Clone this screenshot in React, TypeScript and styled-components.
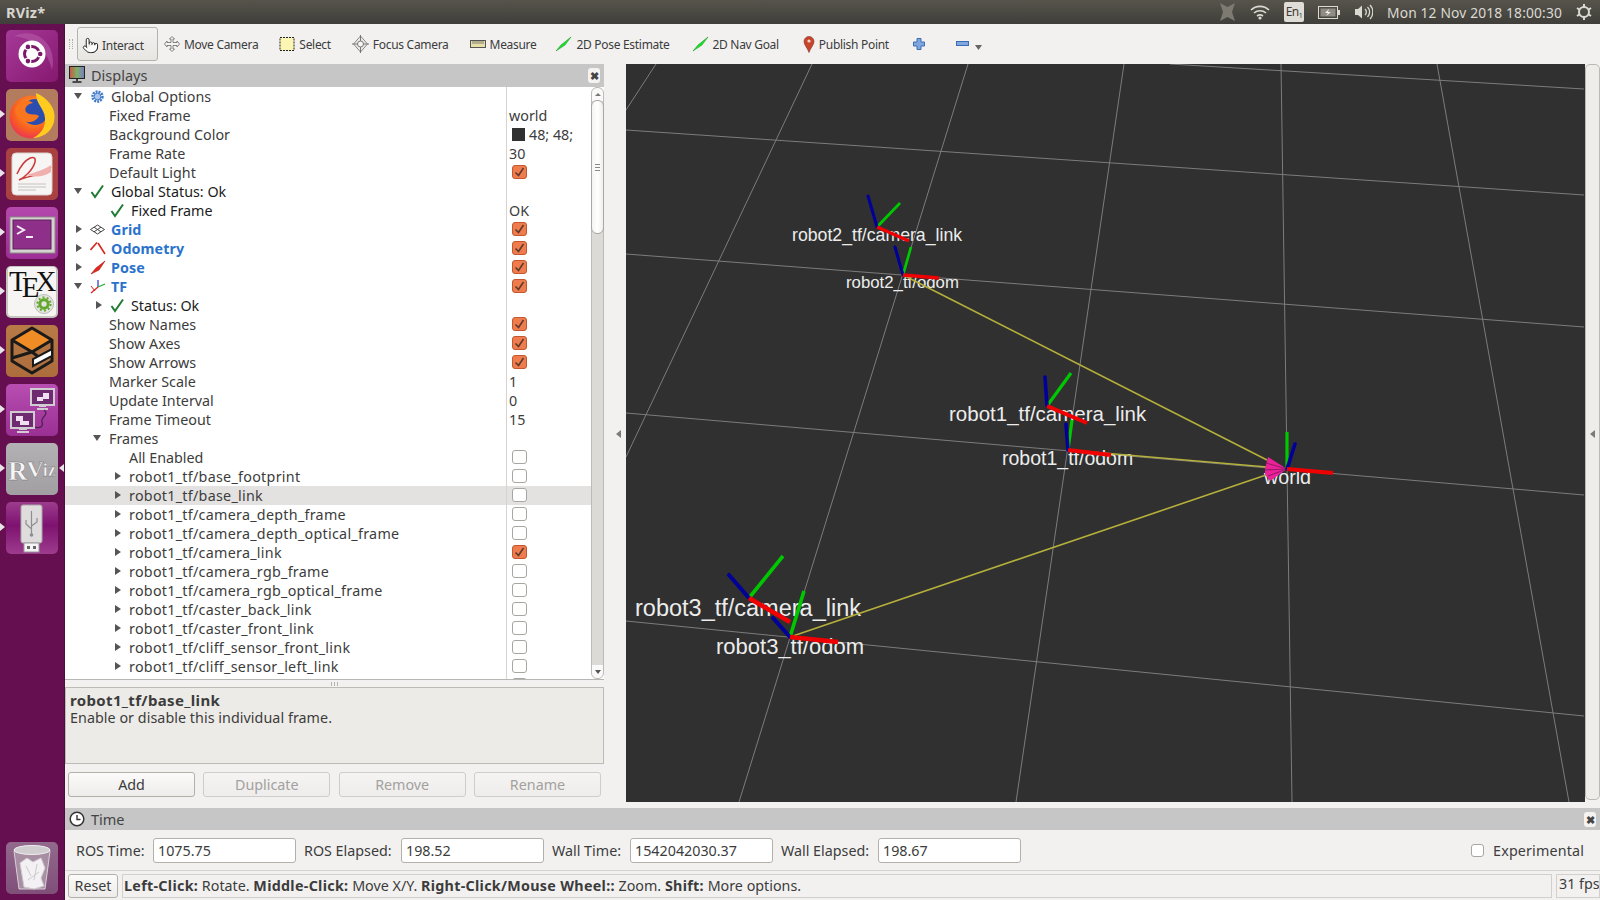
import React from "react";
import styled, { createGlobalStyle } from "styled-components";
import { Pointer } from "lucide-react";

const GlobalStyle = createGlobalStyle`
  html, body {
    margin: 0;
    padding: 0;
    background: #f2f1f0;
    overflow: hidden;
  }
  * {
    box-sizing: border-box;
  }
`;

const UI_FONT = `"Noto Sans", "Open Sans", sans-serif`;

const Page = styled.div`
  width: 1600px;
  height: 900px;
  display: flex;
  flex-direction: column;
  font-family: ${UI_FONT};
  font-size: 14.3px;
  color: #3c3c3c;
  overflow: hidden;
`;

/* ---------- ubuntu top bar ---------- */

const TopBar = styled.div`
  height: 24px;
  flex: none;
  display: flex;
  align-items: center;
  padding: 0 8px 0 6px;
  background: linear-gradient(#56544b, #3f3e3a);
`;

const WindowTitle = styled.div`
  font-weight: 700;
  font-size: 14.5px;
  letter-spacing: 0.2px;
  color: #d9d6cf;
  flex: 1;
`;

const Tray = styled.div`
  display: flex;
  align-items: center;
  height: 24px;
  gap: 14px;
`;

const LangBox = styled.div`
  width: 20px;
  height: 20px;
  background: #e0ddd6;
  border-radius: 2px;
  color: #3c3b37;
  font-size: 12px;
  line-height: 20px;
  text-align: center;
  letter-spacing: -0.5px;
`;

const LangIndex = styled.span`
  font-size: 7px;
  vertical-align: -2px;
`;

const Clock = styled.div`
  color: #dcd9d2;
  font-size: 13.8px;
  letter-spacing: 0.15px;
  width: 175px;
  white-space: nowrap;
`;

/* ---------- launcher ---------- */

const Body = styled.div`
  flex: 1;
  display: flex;
  min-height: 0;
`;

const Launcher = styled.div`
  width: 65px;
  flex: none;
  display: flex;
  flex-direction: column;
  align-items: center;
  gap: 7px;
  padding: 6px 1px 6px 0;
  background: #650f50;
  border-right: 1px solid #4d0c3e;
`;

const Tile = styled.div<{ $bg: string; $last?: boolean }>`
  position: relative;
  width: 52px;
  height: 52px;
  flex: none;
  border-radius: 5px;
  background: ${(p) => p.$bg};
  margin-top: ${(p) => (p.$last ? "auto" : "0")};
  svg {
    display: block;
  }
`;

const Pip = styled.span<{ $side: "left" | "right" }>`
  position: absolute;
  top: 21px;
  ${(p) => (p.$side === "left" ? "left: -6px;" : "right: -6px;")}
  width: 0;
  height: 0;
  border-top: 4px solid transparent;
  border-bottom: 4px solid transparent;
  ${(p) =>
    p.$side === "left"
      ? "border-left: 5px solid #e8e4e8;"
      : "border-right: 5px solid #e8e4e8;"}
`;

/* ---------- toolbar ---------- */

const Main = styled.div`
  flex: 1;
  min-width: 0;
  display: flex;
  flex-direction: column;
`;

const Toolbar = styled.div`
  height: 40px;
  flex: none;
  display: flex;
  align-items: center;
  padding-left: 4px;
  background: #f2f1f0;
  font-size: 12px;
  letter-spacing: -0.3px;
  color: #3c3c3c;
`;

const Grip = styled.div`
  width: 4px;
  height: 10px;
  margin-right: 4px;
  border-left: 1px dotted #aaa;
  border-right: 1px dotted #aaa;
`;

const ToolGroup = styled.div`
  display: flex;
  align-items: center;
  gap: 21px;
`;

const ActiveTool = styled.div`
  width: 81px;
  height: 34px;
  display: flex;
  align-items: center;
  gap: 3px;
  padding-left: 4px;
  padding-top: 2px;
  border: 1px solid #b5b2ac;
  border-radius: 3px;
  background: linear-gradient(#f3f2f0, #e8e6e3);
  margin-right: 6px;
`;

const Tool = styled.div<{ $nudge?: number }>`
  display: flex;
  align-items: center;
  gap: 4px;
  white-space: nowrap;
  margin-left: ${(p) => p.$nudge ?? 0}px;
`;

/* ---------- workspace ---------- */

const Workspace = styled.div`
  height: 744px;
  flex: none;
  display: flex;
  background: #f2f1f0;
`;

const Dock = styled.div`
  width: 539px;
  flex: none;
  display: flex;
  flex-direction: column;
`;

const DockTitle = styled.div`
  position: relative;
  height: 23px;
  flex: none;
  display: flex;
  align-items: center;
  gap: 6px;
  padding: 0 0 2px 4px;
  background: #c6c6c6;
  font-size: 14.5px;
  color: #444;
`;

const CloseBox = styled.div`
  position: absolute;
  right: 4px;
  top: 4px;
  width: 12px;
  height: 15px;
  border-radius: 3px;
  background: #f4f3f2;
  color: #444;
  font-size: 11px;
  font-weight: 700;
  line-height: 15px;
  text-align: center;
`;

const TreeArea = styled.div`
  height: 593px;
  flex: none;
  display: flex;
  background: #fff;
  border-bottom: 1px solid #b8b6b2;
`;

const TreeRows = styled.div`
  width: 526px;
  flex: none;
  overflow: hidden;
`;

const Row = styled.div<{ $selected?: boolean }>`
  height: 19px;
  display: flex;
  background: ${(p) => (p.$selected ? "#e3e2e0" : "#fff")};
`;

const NameCell = styled.div<{ $indent: number }>`
  width: 441px;
  flex: none;
  display: flex;
  align-items: center;
  padding-left: ${(p) => p.$indent}px;
  padding-bottom: 1px;
  white-space: nowrap;
`;

const ValueCell = styled.div`
  width: 85px;
  flex: none;
  display: flex;
  align-items: center;
  padding-left: 2px;
  padding-bottom: 1px;
  border-left: 1px solid #d6d4d1;
  white-space: nowrap;
  overflow: hidden;
`;

const ArrowSlot = styled.span`
  width: 17px;
  flex: none;
  display: block;
  padding-left: 1px;
`;

const Arrow = styled.span<{ $open: boolean }>`
  display: block;
  width: 0;
  height: 0;
  ${(p) =>
    p.$open
      ? `border-left: 4.5px solid transparent;
         border-right: 4.5px solid transparent;
         border-top: 6px solid #555;`
      : `margin-left: 2px;
         border-top: 4.5px solid transparent;
         border-bottom: 4.5px solid transparent;
         border-left: 6px solid #555;`}
`;

const IconSlot = styled.span`
  width: 21px;
  flex: none;
  display: flex;
  align-items: center;
  svg {
    display: block;
  }
`;

const Label = styled.span<{ $tone?: "link" | "dark"; $frame?: boolean }>`
  font-weight: ${(p) => (p.$tone === "link" ? 700 : 400)};
  letter-spacing: ${(p) => (p.$frame ? "0.28px" : p.$tone === "link" ? "0.1px" : "0")};
  color: ${(p) =>
    p.$tone === "link" ? "#2a73cc" : p.$tone === "dark" ? "#1c1c1c" : "#3c3c3c"};
`;

const CheckBox = styled.span<{ $on?: boolean }>`
  width: 15px;
  height: 14px;
  margin-left: 3px;
  flex: none;
  display: flex;
  align-items: center;
  justify-content: center;
  border-radius: 3px;
  border: 1px solid ${(p) => (p.$on ? "#c2592e" : "#a8a6a2")};
  background: ${(p) => (p.$on ? "#ee7c4e" : "#fff")};
`;

const Swatch = styled.span`
  width: 13px;
  height: 13px;
  margin: 0 4px 0 3px;
  flex: none;
  background: #303030;
`;

const ScrollBar = styled.div`
  width: 13px;
  flex: none;
  position: relative;
  background: #dcdad7;
  border: 1px solid #bdbbb7;
  border-radius: 6px;
`;

const ScrollThumb = styled.div`
  position: absolute;
  left: -1px;
  right: -1px;
  top: 12px;
  height: 134px;
  border: 1px solid #a9a7a3;
  border-radius: 6px;
  background: linear-gradient(90deg, #f5f4f3, #fff 50%, #efeeec);
  display: flex;
  align-items: center;
  justify-content: center;
`;

const ThumbGrip = styled.div`
  width: 5px;
  height: 7px;
  border-top: 1px solid #888;
  border-bottom: 1px solid #888;
  position: relative;
  &::after {
    content: "";
    position: absolute;
    left: 0;
    right: 0;
    top: 2px;
    height: 1px;
    background: #888;
  }
`;

const ScrollCap = styled.div<{ $at: "top" | "bottom" }>`
  position: absolute;
  left: 0;
  right: 0;
  ${(p) => (p.$at === "top" ? "top: 0; border-radius: 6px 6px 0 0;" : "bottom: 0; border-radius: 0 0 6px 6px;")}
  height: 13px;
  background: #fafafa;
  display: flex;
  align-items: center;
  justify-content: center;
`;

const CapArrow = styled.span<{ $up?: boolean }>`
  width: 0;
  height: 0;
  border-left: 3px solid transparent;
  border-right: 3px solid transparent;
  ${(p) => (p.$up ? "border-bottom: 3px solid #777;" : "border-top: 4px solid #555;")}
`;

const SplitHandle = styled.div`
  height: 7px;
  flex: none;
  display: flex;
  align-items: center;
  justify-content: center;
`;

const SplitMarks = styled.span`
  width: 7px;
  height: 4px;
  background: repeating-linear-gradient(90deg, #b5b3af 0 1px, transparent 1px 3px);
`;

const Description = styled.div`
  height: 77px;
  flex: none;
  padding: 4px 4px;
  background: #edebe7;
  border: 1px solid #bdbbb6;
  font-size: 14.3px;
  line-height: 17px;
  color: #3c3c3c;
  letter-spacing: 0.05px;
`;

const DescTitle = styled.div`
  font-weight: 700;
  font-size: 15px;
  letter-spacing: 0.35px;
`;

const DockButtons = styled.div`
  display: flex;
  justify-content: space-between;
  padding: 8px 3px 0 3px;
`;

const PushButton = styled.button<{ $w?: number; $h?: number }>`
  width: ${(p) => p.$w ?? 127}px;
  height: ${(p) => p.$h ?? 25}px;
  padding: 0;
  font-family: ${UI_FONT};
  font-size: 14.3px;
  color: #3c3c3c;
  border: 1px solid #b3b0aa;
  border-radius: 3px;
  background: linear-gradient(#fbfbfa, #eeecea);
  &:disabled {
    color: #a2a19e;
    border-color: #cfcdc9;
    background: linear-gradient(#f5f4f3, #eeedeb);
  }
`;

const Gutter = styled.div`
  width: 22px;
  flex: none;
  display: flex;
  align-items: center;
  padding-left: 12px;
  padding-bottom: 4px;
`;

const GutterArrow = styled.span`
  width: 0;
  height: 0;
  border-top: 4px solid transparent;
  border-bottom: 4px solid transparent;
  border-right: 5px solid #7c7b78;
`;

const RenderPanel = styled.div`
  width: 959px;
  height: 738px;
  flex: none;
  background: #303030;
  svg {
    display: block;
  }
`;

const SideHandle = styled.div`
  width: 15px;
  height: 736px;
  flex: none;
  display: flex;
  align-items: center;
  justify-content: center;
  padding-top: 4px;
  background: #efedea;
  border: 1px solid #bcb9b4;
  border-radius: 5px;
`;

/* ---------- time panel ---------- */

const TimeTitle = styled(DockTitle)`
  height: 22px;
  padding-bottom: 0;
`;

const TimeRow = styled.div`
  height: 40px;
  flex: none;
  display: flex;
  align-items: center;
  padding: 0 16px 0 11px;
  gap: 8px;
  background: #f2f1f0;
`;

const TimeLabel = styled.span<{ $w: number }>`
  width: ${(p) => p.$w}px;
  white-space: nowrap;
`;

const TimeInput = styled.div`
  width: 143px;
  height: 25px;
  padding-left: 4px;
  line-height: 23px;
  background: #fff;
  border: 1px solid #b3b0aa;
  border-radius: 3px;
`;

const Experimental = styled.div`
  margin-left: auto;
  display: flex;
  align-items: center;
  gap: 9px;
  letter-spacing: 0.15px;
`;

const ExperimentalBox = styled.span`
  width: 13px;
  height: 13px;
  border: 1px solid #a8a6a2;
  border-radius: 3px;
  background: #fff;
`;

const StatusBar = styled.div`
  height: 30px;
  flex: none;
  display: flex;
  align-items: center;
  gap: 4px;
  padding: 3px 0 3px 3px;
  background: #f2f1f0;
  border-top: 1px solid #d4d2ce;
`;

const StatusBox = styled.div`
  width: 1430px;
  height: 24px;
  padding-left: 1px;
  line-height: 21px;
  border: 1px solid #d2d0cc;
  white-space: nowrap;
`;

const Strong = styled.b`
  letter-spacing: 0.3px;
`;

const FpsBox = styled.div`
  flex: 1;
  height: 24px;
  padding-left: 2px;
  line-height: 17px;
  border: 1px solid #d2d0cc;
  white-space: nowrap;
  overflow: hidden;
`;

/* ---------- tree data ---------- */

type TreeIcon = "gear" | "ok" | "grid" | "odom" | "pose" | "tf";

type TreeRowData = {
  name: string;
  indent: number;
  arrow?: "open" | "closed";
  icon?: TreeIcon;
  tone?: "link" | "dark";
  value?: string;
  color?: boolean;
  check?: boolean;
  selected?: boolean;
  isFrame?: boolean;
};

const frame = (name: string, extra: Partial<TreeRowData> = {}): TreeRowData => ({
  name: `robot1_tf/${name}`,
  indent: 47,
  arrow: "closed",
  check: false,
  isFrame: true,
  ...extra,
});

const rows: TreeRowData[] = [
  { name: "Global Options", indent: 8, arrow: "open", icon: "gear" },
  { name: "Fixed Frame", indent: 44, value: "world" },
  { name: "Background Color", indent: 44, value: "48; 48;", color: true },
  { name: "Frame Rate", indent: 44, value: "30" },
  { name: "Default Light", indent: 44, check: true },
  { name: "Global Status: Ok", indent: 8, arrow: "open", icon: "ok", tone: "dark" },
  { name: "Fixed Frame", indent: 45, icon: "ok", tone: "dark", value: "OK" },
  { name: "Grid", indent: 8, arrow: "closed", icon: "grid", tone: "link", check: true },
  { name: "Odometry", indent: 8, arrow: "closed", icon: "odom", tone: "link", check: true },
  { name: "Pose", indent: 8, arrow: "closed", icon: "pose", tone: "link", check: true },
  { name: "TF", indent: 8, arrow: "open", icon: "tf", tone: "link", check: true },
  { name: "Status: Ok", indent: 28, arrow: "closed", icon: "ok", tone: "dark" },
  { name: "Show Names", indent: 44, check: true },
  { name: "Show Axes", indent: 44, check: true },
  { name: "Show Arrows", indent: 44, check: true },
  { name: "Marker Scale", indent: 44, value: "1" },
  { name: "Update Interval", indent: 44, value: "0" },
  { name: "Frame Timeout", indent: 44, value: "15" },
  { name: "Frames", indent: 27, arrow: "open" },
  { name: "All Enabled", indent: 64, check: false },
  frame("base_footprint"),
  frame("base_link", { selected: true }),
  frame("camera_depth_frame"),
  frame("camera_depth_optical_frame"),
  frame("camera_link", { check: true }),
  frame("camera_rgb_frame"),
  frame("camera_rgb_optical_frame"),
  frame("caster_back_link"),
  frame("caster_front_link"),
  frame("cliff_sensor_front_link"),
  frame("cliff_sensor_left_link"),
  frame("cliff_sensor_right_link"),
];

/* ---------- small icons ---------- */

const TickMark = () => (
  <svg width="11" height="10" viewBox="0 0 11 10">
    <path d="M1.5 5.5 L4.5 8.5 L9.5 1" fill="none" stroke="#5d3a2a" strokeWidth="1.6" />
  </svg>
);

const TreeIconView = ({ kind }: { kind: TreeIcon }) => {
  if (kind === "gear") {
    return (
      <svg width="15" height="15" viewBox="0 0 15 15">
        <circle cx="7.5" cy="7.5" r="5" fill="none" stroke="#3d78c9" strokeWidth="2.4" strokeDasharray="2 1" />
        <circle cx="7.5" cy="7.5" r="3.4" fill="#a9c6ea" stroke="#3d78c9" />
      </svg>
    );
  }
  if (kind === "ok") {
    return (
      <svg width="15" height="15" viewBox="0 0 15 15">
        <path d="M1.5 8 L5 13 L13 1.5" fill="none" stroke="#1f7a33" strokeWidth="2" />
      </svg>
    );
  }
  if (kind === "grid") {
    return (
      <svg width="15" height="15" viewBox="0 0 15 15">
        <path d="M0.5 7.5 L7.5 3 L14.5 7.5 L7.5 12 Z M4 5.2 L11 9.8 M11 5.2 L4 9.8" fill="none" stroke="#444" strokeWidth="1" />
      </svg>
    );
  }
  if (kind === "odom") {
    return (
      <svg width="16" height="15" viewBox="0 0 16 15">
        <path d="M0.5 9 L7 1.5 M8 2 L15 13" fill="none" stroke="#d8261c" strokeWidth="1.6" />
      </svg>
    );
  }
  if (kind === "pose") {
    return (
      <svg width="16" height="15" viewBox="0 0 16 15">
        <path d="M1 14 L6 8 L15 1 L9 10 Z" fill="#e8251b" stroke="#a31a12" strokeWidth="0.6" />
      </svg>
    );
  }
  return (
    <svg width="16" height="15" viewBox="0 0 16 15">
      <path d="M8 8 L8 1" stroke="#2233cc" strokeWidth="1.2" />
      <path d="M8 8 L15 5" stroke="#22aa33" strokeWidth="1.2" />
      <path d="M8 8 L1 14" stroke="#dd2222" strokeWidth="1.2" />
      <path d="M1 7 L5 12" stroke="#dd2222" strokeWidth="1" />
    </svg>
  );
};

const MonitorIcon = () => (
  <svg width="16" height="17" viewBox="0 0 16 17">
    <defs>
      <linearGradient id="screen" x1="0" x2="1" y1="0" y2="0">
        <stop offset="0" stopColor="#c9553f" />
        <stop offset="0.5" stopColor="#7db06a" />
        <stop offset="1" stopColor="#7a7ac4" />
      </linearGradient>
    </defs>
    <rect x="0.5" y="0.5" width="15" height="12" fill="url(#screen)" stroke="#222" />
    <path d="M8 13 V15 M3.5 16 H12.5" stroke="#222" strokeWidth="1.6" />
  </svg>
);

const ClockIcon = () => (
  <svg width="16" height="16" viewBox="0 0 16 16">
    <circle cx="8" cy="8" r="6.8" fill="#fff" stroke="#333" strokeWidth="1.5" />
    <path d="M8 4 V8.5 H11.5" fill="none" stroke="#333" strokeWidth="1.4" />
  </svg>
);

const MoveIcon = () => (
  <svg width="16" height="16" viewBox="0 0 16 16">
    <path
      d="M8 0.5 L10.5 3 H9 V6.5 H13 V5 L15.5 8 L13 11 V9.5 H9 V13 H10.5 L8 15.5 L5.5 13 H7 V9.5 H3 V11 L0.5 8 L3 5 V6.5 H7 V3 H5.5 Z"
      fill="#f4f4f2"
      stroke="#666"
      strokeWidth="0.8"
    />
  </svg>
);

const SelectIcon = () => (
  <svg width="16" height="16" viewBox="0 0 16 16">
    <rect x="1" y="1.5" width="14" height="13" fill="#fbf6b4" stroke="#222" strokeDasharray="2 1" />
  </svg>
);

const FocusIcon = () => (
  <svg width="17" height="18" viewBox="0 0 17 18">
    <path d="M8.5 1 L15.5 9 L8.5 17 L1.5 9 Z" fill="#ecebe8" stroke="#888" />
    <path d="M8.5 0 V18 M0 9 H17" stroke="#777" strokeWidth="1" />
    <circle cx="8.5" cy="9" r="3" fill="#f5f5f3" stroke="#777" />
  </svg>
);

const MeasureIcon = () => (
  <svg width="16" height="8" viewBox="0 0 16 8">
    <rect x="0.5" y="0.5" width="15" height="7" fill="#e7dfa8" stroke="#555" />
    <path d="M3 1 V4 M5 1 V4 M7 1 V4 M9 1 V4 M11 1 V4 M13 1 V4" stroke="#666" strokeWidth="0.8" />
  </svg>
);

const GreenArrowIcon = () => (
  <svg width="17" height="16" viewBox="0 0 17 16">
    <path d="M1 15 L6 9 L16 1 L10 9 Z" fill="#18e32b" stroke="#0c8c1a" strokeWidth="0.5" />
  </svg>
);

const PinIcon = () => (
  <svg width="12" height="17" viewBox="0 0 12 17">
    <path d="M6 16.5 C4.5 12 1 9 1 5.5 A5 5 0 0 1 11 5.5 C11 9 7.5 12 6 16.5 Z" fill="#c8452c" stroke="#7a3a28" strokeWidth="0.6" />
    <circle cx="6" cy="5" r="1.6" fill="#f0d8c8" />
  </svg>
);

const PlusIcon = () => (
  <svg width="12" height="12" viewBox="0 0 12 12">
    <path d="M4 0.5 H8 V4 H11.5 V8 H8 V11.5 H4 V8 H0.5 V4 H4 Z" fill="#7fa6de" stroke="#3c6cb4" />
  </svg>
);

const MinusIcon = () => (
  <svg width="26" height="12" viewBox="0 0 26 12">
    <rect x="0.5" y="3.5" width="12" height="4" fill="#7fa6de" stroke="#3c6cb4" />
    <path d="M19 7 H26 L22.5 12 Z" fill="#666" />
  </svg>
);

/* ---------- tray ---------- */

const TrayIcons = () => (
  <Tray>
    <svg width="17" height="18" viewBox="0 0 17 18">
      <path d="M1 0 L8.5 4 L16 0 L13 9 L16 18 L8.5 14 L1 18 L4 9 Z" fill="#7d7a72" />
    </svg>
    <svg width="20" height="15" viewBox="0 0 20 15">
      <path d="M1 5 A13 13 0 0 1 19 5 M4 8 A9 9 0 0 1 16 8 M7 11 A5 5 0 0 1 13 11" fill="none" stroke="#dcd9d2" strokeWidth="1.6" />
      <circle cx="10" cy="13" r="1.6" fill="#dcd9d2" />
    </svg>
    <LangBox>
      En<LangIndex>1</LangIndex>
    </LangBox>
    <svg width="22" height="13" viewBox="0 0 22 13">
      <rect x="0.5" y="0.5" width="19" height="12" fill="none" stroke="#dcd9d2" />
      <rect x="2.5" y="2.5" width="15" height="8" fill="#8f8c85" />
      <path d="M20 4 H22 V9 H20 Z" fill="#dcd9d2" />
      <path d="M11 3 L7 7 H10 L8 10 L13 6 H10 Z" fill="#f2f1ee" />
    </svg>
    <svg width="19" height="16" viewBox="0 0 19 16">
      <path d="M1 5 H4 L8 1.5 V14.5 L4 11 H1 Z" fill="#dcd9d2" />
      <path d="M11 5 A4 4 0 0 1 11 11 M13.5 3 A7 7 0 0 1 13.5 13 M16 1 A10 10 0 0 1 16 15" fill="none" stroke="#dcd9d2" strokeWidth="1.3" />
    </svg>
    <Clock>Mon 12 Nov 2018 18:00:30</Clock>
    <svg width="16" height="18" viewBox="0 0 16 18">
      <circle cx="8" cy="9" r="5" fill="none" stroke="#dcd9d2" strokeWidth="2" />
      <path d="M8 1 V5 M8 13 V17 M1 5 L4 7 M15 5 L12 7 M1 13 L4 11 M15 13 L12 11" stroke="#dcd9d2" strokeWidth="2" />
    </svg>
  </Tray>
);

/* ---------- launcher icons ---------- */

const UbuntuTile = () => (
  <svg width="52" height="52" viewBox="0 0 52 52">
    <path d="M8 6 C30 -4 52 14 46 40 C42 20 26 8 8 6 Z" fill="#b65aa8" opacity="0.6" />
    <circle cx="26" cy="24" r="13.5" fill="#fff" />
    <circle cx="26" cy="24" r="7.5" fill="none" stroke="#7a1a68" strokeWidth="3" />
    <circle cx="34" cy="24" r="3.4" fill="#fff" />
    <circle cx="22" cy="17" r="3.4" fill="#fff" />
    <circle cx="22" cy="31" r="3.4" fill="#fff" />
    <circle cx="34.2" cy="24" r="2.3" fill="#7a1a68" />
    <circle cx="21.9" cy="16.9" r="2.3" fill="#7a1a68" />
    <circle cx="21.9" cy="31.1" r="2.3" fill="#7a1a68" />
  </svg>
);

const FirefoxTile = () => (
  <svg width="52" height="52" viewBox="0 0 52 52">
    <defs>
      <radialGradient id="fox" cx="0.55" cy="0.35" r="0.75">
        <stop offset="0" stopColor="#ffb02e" />
        <stop offset="0.6" stopColor="#f8601f" />
        <stop offset="1" stopColor="#e8246a" />
      </radialGradient>
    </defs>
    <circle cx="25" cy="28" r="21.5" fill="url(#fox)" />
    <circle cx="29" cy="23" r="13" fill="#2c4db0" />
    <path d="M30 4 C44 10 51 22 48 33 C45 44 35 49 27 49 C38 44 42 32 37 22 C34 16 30 12 30 4 Z" fill="#ffcb1f" />
    <path d="M9 20 C14 11 22 10 27 14 C21 15 18 19 20 23 C24 27 30 24 33 27 C30 33 22 35 16 31 C11 28 9 25 9 20 Z" fill="#f9761e" />
  </svg>
);

const DocTile = () => (
  <svg width="52" height="52" viewBox="0 0 52 52">
    <rect x="6" y="5" width="40" height="42" rx="4" fill="#f7f5f3" stroke="#d8d2ce" />
    <path d="M11 26 C19 8 31 6 29 14 C27 22 18 30 13 32 C24 27 36 28 45 19" fill="none" stroke="#cc3a3a" strokeWidth="1.5" />
    <path d="M20 27 C30 24 38 22 45 17 V24 C36 30 28 29 20 27 Z" fill="#f0b0ae" />
    <path d="M12 36 H40 M12 39 H40 M12 42 H30" stroke="#c4c0bc" strokeWidth="1" />
  </svg>
);

const TerminalTile = () => (
  <svg width="52" height="52" viewBox="0 0 52 52">
    <rect x="4" y="10" width="45" height="36" fill="#d5d3d0" stroke="#8d8a86" />
    <rect x="7" y="13" width="38" height="29" fill="#8e2f8a" stroke="#5f1e5c" />
    <path d="M11 19 L18 23 L11 27" fill="none" stroke="#f2eef2" strokeWidth="2" />
    <path d="M20 30 H27" stroke="#f2eef2" strokeWidth="2" />
  </svg>
);

const TexText = styled.text`
  font-family: "Liberation Serif", serif;
  font-size: 29px;
  fill: #111;
`;

const TexTile = () => (
  <svg width="52" height="52" viewBox="0 0 52 52">
    <rect x="2" y="1" width="48" height="49" rx="3" fill="#f6f5f3" />
    <TexText x="3" y="25">
      T
      <tspan dx="-5" dy="6">
        E
      </tspan>
      <tspan dx="-4" dy="-6">
        X
      </tspan>
    </TexText>
    <circle cx="38" cy="38" r="9.5" fill="#e4e4e0" stroke="#bbb" />
    <circle cx="38" cy="38" r="4.2" fill="none" stroke="#63a82c" strokeWidth="3" />
    <circle cx="38" cy="38" r="6.6" fill="none" stroke="#63a82c" strokeWidth="2" strokeDasharray="2 2.2" />
  </svg>
);

const BoxTile = () => (
  <svg width="52" height="52" viewBox="0 0 52 52">
    <path d="M26 3 L46 15 L26 27 L6 15 Z" fill="#f08c25" />
    <path d="M26 3 L46 15 V36 L26 48 L6 36 V15 Z M6 15 L26 27 L46 15 M6 33 L26 27 M26 27 L34 33" fill="none" stroke="#1a1a1a" strokeWidth="3" strokeLinejoin="round" />
    <path d="M27 41 V34 L46 24 V31 Z" fill="#fff" stroke="#1a1a1a" strokeWidth="2" />
  </svg>
);

const NetworkTile = () => (
  <svg width="52" height="52" viewBox="0 0 52 52">
    <rect x="25" y="5" width="23" height="16" fill="#6e2b70" stroke="#cfcdd0" strokeWidth="2" />
    <path d="M31 13 H37 V9 H43 V15 H37 V17 H31 Z" fill="#f0dff0" />
    <path d="M33 22 H40 M31 25 H42" stroke="#cfcdd0" strokeWidth="2" />
    <rect x="5" y="28" width="23" height="16" fill="#6e2b70" stroke="#cfcdd0" strokeWidth="2" />
    <path d="M10 32 H17 V37 H23 V41 H14 V37 H10 Z" fill="#f0dff0" />
    <path d="M13 45 H21 M11 48 H23" stroke="#cfcdd0" strokeWidth="2" />
    <path d="M38 26 C44 31 34 33 36 38 C38 44 32 44 29 43" fill="none" stroke="#4a2050" strokeWidth="1.2" />
  </svg>
);

const RvizText = styled.text`
  font-family: "Liberation Serif", serif;
  font-weight: 700;
  fill: #f6f5f5;
  stroke: #6f6d70;
  stroke-width: 0.4px;
`;

const RvizTile = () => (
  <svg width="52" height="52" viewBox="0 0 52 52">
    <RvizText x="2" y="37" fontSize="27">
      R
      <tspan dx="-1" dy="-3" fontSize="24">
        V
      </tspan>
      <tspan dx="-1" dy="-1" fontSize="18">
        iz
      </tspan>
    </RvizText>
  </svg>
);

const UsbTile = () => (
  <svg width="52" height="52" viewBox="0 0 52 52">
    <rect x="15" y="3" width="21" height="38" rx="2" fill="#dedcdc" stroke="#a9a7a7" />
    <rect x="18" y="41" width="15" height="9" fill="#f4f4f4" stroke="#999" />
    <rect x="21" y="44" width="3" height="3" fill="#666" />
    <rect x="27" y="44" width="3" height="3" fill="#666" />
    <path d="M25.5 9 V33 M25.5 27 L20 22 V18 M25.5 24 L31 20 V16" fill="none" stroke="#8f8d8d" strokeWidth="1.2" />
    <circle cx="25.5" cy="33" r="1.8" fill="#8f8d8d" />
  </svg>
);

const TrashTile = () => (
  <svg width="52" height="52" viewBox="0 0 52 52">
    <path d="M8 9 L13 47 H39 L44 9 Z" fill="#a78ea3" stroke="#d8d2d6" />
    <ellipse cx="26" cy="8" rx="18" ry="4.5" fill="#d0ccd0" stroke="#efefef" />
    <path d="M14 21 L21 16 L27 20 L35 16 L39 26 L35 36 L38 44 L28 47 L18 45 L16 33 Z" fill="#f3f1f3" stroke="#cfc9ce" />
    <path d="M20 24 L25 34 M31 22 L28 38 M22 38 L33 30" stroke="#cfc9ce" strokeWidth="1" />
  </svg>
);

/* ---------- 3D view ---------- */

type Pt = [number, number];

const gridLines: [Pt, Pt][] = [
  [[1170, 64], [1584, 89]],
  [[626, 130], [1584, 195]],
  [[626, 254], [1584, 327]],
  [[626, 413], [1584, 495]],
  [[626, 621], [1584, 716]],
  [[656, 64], [626, 110]],
  [[812, 64], [626, 457]],
  [[968, 64], [739, 802]],
  [[1124, 64], [1016, 802]],
  [[1281, 64], [1292, 802]],
  [[1437, 64], [1569, 802]],
];

const tfLinks: [Pt, Pt][] = [
  [[903, 275], [1267, 460]],
  [[1068, 450], [1267, 467]],
  [[790, 637], [1266, 475]],
];

const tfFrames: { o: Pt; b: Pt; g: Pt; r: Pt; w: number }[] = [
  { o: [877, 227], b: [868, 196], g: [900, 203], r: [909, 241], w: 3.4 },
  { o: [903, 275], b: [895, 247], g: [911, 247], r: [939, 278], w: 3.4 },
  { o: [1047, 406], b: [1045, 377], g: [1071, 373], r: [1087, 423], w: 4 },
  { o: [1068, 450], b: [1066, 424], g: [1072, 420], r: [1111, 455], w: 4 },
  { o: [1287, 469], b: [1295, 444], g: [1287, 432], r: [1333, 473], w: 4 },
  { o: [749, 598], b: [729, 575], g: [783, 556], r: [790, 622], w: 4.5 },
  { o: [790, 637], b: [773, 618], g: [804, 591], r: [838, 642], w: 4.5 },
];

const tfLabels: { text: string; x: number; y: number; size: number }[] = [
  { text: "robot2_tf/camera_link", x: 792, y: 241, size: 17.7 },
  { text: "robot2_tf/odom", x: 846, y: 288, size: 16.8 },
  { text: "robot1_tf/camera_link", x: 949, y: 421, size: 20.5 },
  { text: "robot1_tf/odom", x: 1002, y: 465, size: 19.5 },
  { text: "world", x: 1264, y: 484, size: 19.7 },
  { text: "robot3_tf/camera_link", x: 635, y: 616, size: 23.5 },
  { text: "robot3_tf/odom", x: 716, y: 654, size: 22 },
];

const SceneLabel = styled.text`
  font-family: "Liberation Sans", sans-serif;
  fill: #ececec;
`;

const Seg = ({ a, b, color, w, round }: { a: Pt; b: Pt; color: string; w: number; round?: boolean }) => (
  <line
    x1={a[0]}
    y1={a[1]}
    x2={b[0]}
    y2={b[1]}
    stroke={color}
    strokeWidth={w}
    strokeLinecap={round ? "round" : "butt"}
  />
);

const Scene = () => (
  <svg width="959" height="738" viewBox="626 64 959 738">
    {gridLines.map(([a, b], i) => (
      <Seg key={i} a={a} b={b} color="#7c7c7c" w={1} />
    ))}
    {tfLabels.map((l) => (
      <SceneLabel key={l.text} x={l.x} y={l.y} fontSize={l.size}>
        {l.text}
      </SceneLabel>
    ))}
    {tfLinks.map(([a, b], i) => (
      <Seg key={i} a={a} b={b} color="#b5b03a" w={1.6} />
    ))}
    <polygon points="1287,469 1268,457 1265,469 1265,474 1270,481" fill="#ea2199" />
    <path d="M1287 469 L1266 463 M1287 469 L1265 470 M1287 469 L1268 476" stroke="#7d1658" strokeWidth="0.8" />
    {tfFrames.map((f, i) => (
      <g key={i}>
        <Seg a={f.o} b={f.g} color="#00c800" w={f.w * 0.8} />
        <Seg a={f.o} b={f.b} color="#000098" w={f.w * 0.9} round />
        <Seg a={f.o} b={f.r} color="#f00000" w={f.w} />
      </g>
    ))}
  </svg>
);

/* ---------- app ---------- */

export default function App() {
  return (
    <Page>
      <GlobalStyle />
      <TopBar>
        <WindowTitle>RViz*</WindowTitle>
        <TrayIcons />
      </TopBar>
      <Body>
        <Launcher>
          <Tile $bg="linear-gradient(135deg, #a53a98, #86186f)">
            <UbuntuTile />
          </Tile>
          <Tile $bg="#b47c5e">
            <Pip $side="left" />
            <FirefoxTile />
          </Tile>
          <Tile $bg="#a8413f">
            <Pip $side="left" />
            <DocTile />
          </Tile>
          <Tile $bg="linear-gradient(#b448ad, #9c2e96)">
            <Pip $side="left" />
            <TerminalTile />
          </Tile>
          <Tile $bg="#c7c5bf">
            <Pip $side="left" />
            <TexTile />
          </Tile>
          <Tile $bg="linear-gradient(#b87a46, #ad6c3c)">
            <Pip $side="left" />
            <BoxTile />
          </Tile>
          <Tile $bg="linear-gradient(#b84eb2, #9a2f94)">
            <Pip $side="left" />
            <NetworkTile />
          </Tile>
          <Tile $bg="linear-gradient(#b4b1b4, #a29fa3)">
            <Pip $side="left" />
            <Pip $side="right" />
            <RvizTile />
          </Tile>
          <Tile $bg="linear-gradient(#9d3c8d, #7e1270 45%, #9d3c8d)">
            <Pip $side="left" />
            <UsbTile />
          </Tile>
          <Tile $last $bg="linear-gradient(#93698d, #7f4f79)">
            <TrashTile />
          </Tile>
        </Launcher>
        <Main>
          <Toolbar>
            <Grip />
            <ActiveTool>
              <Pointer size={17} color="#222" fill="#fff" strokeWidth={1.4} />
              Interact
            </ActiveTool>
            <ToolGroup>
              <Tool>
                <MoveIcon />
                Move Camera
              </Tool>
              <Tool>
                <SelectIcon />
                Select
              </Tool>
              <Tool>
                <FocusIcon />
                Focus Camera
              </Tool>
              <Tool>
                <MeasureIcon />
                Measure
              </Tool>
              <Tool $nudge={-2}>
                <GreenArrowIcon />
                2D Pose Estimate
              </Tool>
              <Tool $nudge={1}>
                <GreenArrowIcon />
                2D Nav Goal
              </Tool>
              <Tool $nudge={3}>
                <PinIcon />
                Publish Point
              </Tool>
              <Tool $nudge={3}>
                <PlusIcon />
              </Tool>
              <Tool $nudge={10}>
                <MinusIcon />
              </Tool>
            </ToolGroup>
          </Toolbar>
          <Workspace>
            <Dock>
              <DockTitle>
                <MonitorIcon />
                Displays
                <CloseBox>✖</CloseBox>
              </DockTitle>
              <TreeArea>
                <TreeRows>
                  {rows.map((r, i) => (
                    <Row key={i} $selected={r.selected}>
                      <NameCell $indent={r.indent}>
                        {r.arrow && (
                          <ArrowSlot>
                            <Arrow $open={r.arrow === "open"} />
                          </ArrowSlot>
                        )}
                        {r.icon && (
                          <IconSlot>
                            <TreeIconView kind={r.icon} />
                          </IconSlot>
                        )}
                        <Label $tone={r.tone} $frame={r.isFrame}>
                          {r.name}
                        </Label>
                      </NameCell>
                      <ValueCell>
                        {r.check !== undefined && (
                          <CheckBox $on={r.check}>{r.check && <TickMark />}</CheckBox>
                        )}
                        {r.color && <Swatch />}
                        {r.value}
                      </ValueCell>
                    </Row>
                  ))}
                </TreeRows>
                <ScrollBar>
                  <ScrollCap $at="top">
                    <CapArrow $up />
                  </ScrollCap>
                  <ScrollThumb>
                    <ThumbGrip />
                  </ScrollThumb>
                  <ScrollCap $at="bottom">
                    <CapArrow />
                  </ScrollCap>
                </ScrollBar>
              </TreeArea>
              <SplitHandle>
                <SplitMarks />
              </SplitHandle>
              <Description>
                <DescTitle>robot1_tf/base_link</DescTitle>
                Enable or disable this individual frame.
              </Description>
              <DockButtons>
                <PushButton>Add</PushButton>
                <PushButton disabled>Duplicate</PushButton>
                <PushButton disabled>Remove</PushButton>
                <PushButton disabled>Rename</PushButton>
              </DockButtons>
            </Dock>
            <Gutter>
              <GutterArrow />
            </Gutter>
            <RenderPanel>
              <Scene />
            </RenderPanel>
            <SideHandle>
              <GutterArrow />
            </SideHandle>
          </Workspace>
          <TimeTitle>
            <ClockIcon />
            Time
            <CloseBox>✖</CloseBox>
          </TimeTitle>
          <TimeRow>
            <TimeLabel $w={69}>ROS Time:</TimeLabel>
            <TimeInput>1075.75</TimeInput>
            <TimeLabel $w={89}>ROS Elapsed:</TimeLabel>
            <TimeInput>198.52</TimeInput>
            <TimeLabel $w={70}>Wall Time:</TimeLabel>
            <TimeInput>1542042030.37</TimeInput>
            <TimeLabel $w={89}>Wall Elapsed:</TimeLabel>
            <TimeInput>198.67</TimeInput>
            <Experimental>
              <ExperimentalBox />
              Experimental
            </Experimental>
          </TimeRow>
          <StatusBar>
            <PushButton $w={50} $h={24}>
              Reset
            </PushButton>
            <StatusBox>
              <Strong>Left-Click:</Strong> Rotate. <Strong>Middle-Click:</Strong> Move X/Y.{" "}
              <Strong>Right-Click/Mouse Wheel::</Strong> Zoom. <Strong>Shift:</Strong> More options.
            </StatusBox>
            <FpsBox>31 fps</FpsBox>
          </StatusBar>
        </Main>
      </Body>
    </Page>
  );
}
